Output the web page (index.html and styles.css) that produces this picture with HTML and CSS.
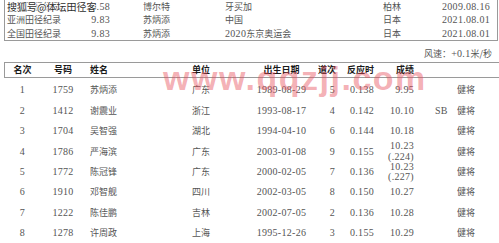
FILE: index.html
```html
<!DOCTYPE html>
<html lang="zh-CN">
<head>
    <meta charset="UTF-8">
    <meta name="viewport" content="width=device-width, initial-scale=1.0">
    <title>男子100米 决赛</title>
    <link rel="stylesheet" href="styles.css">
</head>
<body>

    <div class="page">

        <div class="records">
            <div class="rec-row">
                <span class="rec-name">世界田径纪录</span>
                <span class="rec-mark num">9.58</span>
                <span class="rec-who">博尔特</span>
                <span>牙买加</span>
                <span>柏林</span>
                <span class="num">2009.08.16</span>
            </div>
            <div class="rec-row">
                <span class="rec-name">亚洲田径纪录</span>
                <span class="rec-mark num">9.83</span>
                <span class="rec-who">苏炳添</span>
                <span>中国</span>
                <span>日本</span>
                <span class="num">2021.08.01</span>
            </div>
            <div class="rec-row">
                <span class="rec-name">全国田径纪录</span>
                <span class="rec-mark num">9.83</span>
                <span class="rec-who">苏炳添</span>
                <span><span class="num">2020</span>东京奥运会</span>
                <span>日本</span>
                <span class="num">2021.08.01</span>
            </div>
        </div>

        <div class="wind">风速：<span class="num">+0.1</span>米/秒</div>

        <div class="results">
            <div class="res-head">
                <span class="c-rank">名次</span>
                <span class="c-bib">号码</span>
                <span class="c-name">姓名</span>
                <span class="c-team">单位</span>
                <span class="c-dob">出生日期</span>
                <span class="c-lane">道次</span>
                <span class="c-react">反应时</span>
                <span class="c-time">成绩</span>
                <span class="c-note"></span>
                <span class="c-level"></span>
            </div>

            <div class="res-body">
                <div class="res-row">
                    <span class="c-rank num">1</span>
                    <span class="c-bib num">1759</span>
                    <span class="c-name">苏炳添</span>
                    <span class="c-team">广东</span>
                    <span class="c-dob num">1989-08-29</span>
                    <span class="c-lane num">5</span>
                    <span class="c-react num">0.138</span>
                    <span class="c-time num">9.95</span>
                    <span class="c-note"></span>
                    <span class="c-level">健将</span>
                </div>
                <div class="res-row">
                    <span class="c-rank num">2</span>
                    <span class="c-bib num">1412</span>
                    <span class="c-name">谢震业</span>
                    <span class="c-team">浙江</span>
                    <span class="c-dob num">1993-08-17</span>
                    <span class="c-lane num">4</span>
                    <span class="c-react num">0.142</span>
                    <span class="c-time num">10.10</span>
                    <span class="c-note num">SB</span>
                    <span class="c-level">健将</span>
                </div>
                <div class="res-row">
                    <span class="c-rank num">3</span>
                    <span class="c-bib num">1704</span>
                    <span class="c-name">吴智强</span>
                    <span class="c-team">湖北</span>
                    <span class="c-dob num">1994-04-10</span>
                    <span class="c-lane num">6</span>
                    <span class="c-react num">0.144</span>
                    <span class="c-time num">10.18</span>
                    <span class="c-note"></span>
                    <span class="c-level">健将</span>
                </div>
                <div class="res-row">
                    <span class="c-rank num">4</span>
                    <span class="c-bib num">1786</span>
                    <span class="c-name">严海滨</span>
                    <span class="c-team">广东</span>
                    <span class="c-dob num">2003-01-08</span>
                    <span class="c-lane num">9</span>
                    <span class="c-react num">0.155</span>
                    <span class="c-time num two-line">10.23<br>(.224)</span>
                    <span class="c-note"></span>
                    <span class="c-level">健将</span>
                </div>
                <div class="res-row">
                    <span class="c-rank num">5</span>
                    <span class="c-bib num">1772</span>
                    <span class="c-name">陈冠锋</span>
                    <span class="c-team">广东</span>
                    <span class="c-dob num">2000-02-05</span>
                    <span class="c-lane num">7</span>
                    <span class="c-react num">0.136</span>
                    <span class="c-time num two-line">10.23<br>(.227)</span>
                    <span class="c-note"></span>
                    <span class="c-level">健将</span>
                </div>
                <div class="res-row">
                    <span class="c-rank num">6</span>
                    <span class="c-bib num">1910</span>
                    <span class="c-name">邓智舰</span>
                    <span class="c-team">四川</span>
                    <span class="c-dob num">2002-03-05</span>
                    <span class="c-lane num">8</span>
                    <span class="c-react num">0.150</span>
                    <span class="c-time num">10.27</span>
                    <span class="c-note"></span>
                    <span class="c-level">健将</span>
                </div>
                <div class="res-row">
                    <span class="c-rank num">7</span>
                    <span class="c-bib num">1222</span>
                    <span class="c-name">陈佳鹏</span>
                    <span class="c-team">吉林</span>
                    <span class="c-dob num">2002-07-05</span>
                    <span class="c-lane num">2</span>
                    <span class="c-react num">0.136</span>
                    <span class="c-time num">10.28</span>
                    <span class="c-note"></span>
                    <span class="c-level">健将</span>
                </div>
                <div class="res-row">
                    <span class="c-rank num">8</span>
                    <span class="c-bib num">1278</span>
                    <span class="c-name">许周政</span>
                    <span class="c-team">上海</span>
                    <span class="c-dob num">1995-12-26</span>
                    <span class="c-lane num">3</span>
                    <span class="c-react num">0.155</span>
                    <span class="c-time num">10.29</span>
                    <span class="c-note"></span>
                    <span class="c-level">健将</span>
                </div>
            </div>
        </div>

        <!-- watermarks over the scan -->
        <div class="mark-sohu">搜狐号@体坛田径客</div>
        <div class="mark-site">www.qqzjj.com</div>

    </div>

</body>
</html>
```

FILE: styles.css
```css
body {
    margin: 0;
    background-color: #fff;
    overflow: hidden;
}
.page {
    position: relative;
    width: 499px;
    height: 243px;
    font-family: "Noto Sans CJK SC", sans-serif;
    font-size: 9px;
    color: #555;
}
.num {
    font-family: "Liberation Serif", "Noto Sans CJK SC", serif;
    font-size: 10px;
    letter-spacing: 0.3px;
}

/* record box at the top */
.records {
    margin-left: 4px;
    width: 492px;
    border: 1px solid #9a9a9a;
    border-top: none;
    display: grid;
    grid-template-rows: 13px 14px 13px;
}
.rec-row {
    display: grid;
    grid-template-columns: 80px 25px 115px 158px 59px 1fr;
    align-items: center;
    line-height: 12px;
    white-space: nowrap;
}
.rec-name {
    padding-left: 2px;
}
.rec-mark {
    text-align: right;
}
.rec-who {
    padding-left: 33px;
}

.wind {
    height: 12px;
    line-height: 12px;
    margin-top: 7px;
    margin-bottom: 2px;
    padding-right: 7px;
    text-align: right;
    white-space: nowrap;
}

/* results table */
.res-head,
.res-row {
    display: grid;
    grid-template-columns: 35px 46px 84px 62px 86px 17px 39px 40px 36px 1fr;
    align-items: center;
    white-space: nowrap;
}
.res-head {
    margin-left: 4px;
    height: 14px;
    line-height: 14px;
    border: 1px solid #9a9a9a;
    border-right: none;
    font-weight: bold;
    color: #1a1a1a;
}
.res-body {
    margin-left: 5px;
    padding-top: 2px;
    display: grid;
    grid-auto-rows: 20.4px;
}
.res-row {
    line-height: 12px;
}
.c-rank,
.c-bib,
.c-team {
    text-align: center;
}
.c-name {
    padding-left: 4px;
}
.c-dob {
    padding-left: 13px;
    text-align: center;
}
.c-lane,
.c-react,
.c-time {
    text-align: right;
}
.c-note {
    padding-left: 21px;
}
.c-level {
    padding-left: 7px;
}
.two-line {
    line-height: 10.5px;
}

/* watermarks */
.mark-sohu {
    position: absolute;
    left: 7px;
    top: 1px;
    font-size: 10px;
    line-height: 12px;
    color: #2e2e2e;
    text-shadow: 1px 0 0 #fff, -1px 0 0 #fff, 0 1px 0 #fff, 0 -1px 0 #fff;
    white-space: nowrap;
}
.mark-site {
    position: absolute;
    left: 163px;
    top: 61px;
    font-family: "Liberation Sans", Arial, sans-serif;
    font-size: 34px;
    font-weight: bold;
    line-height: 34px;
    letter-spacing: 1.5px;
    color: rgba(232, 80, 92, 0.45);
    white-space: nowrap;
}
```
